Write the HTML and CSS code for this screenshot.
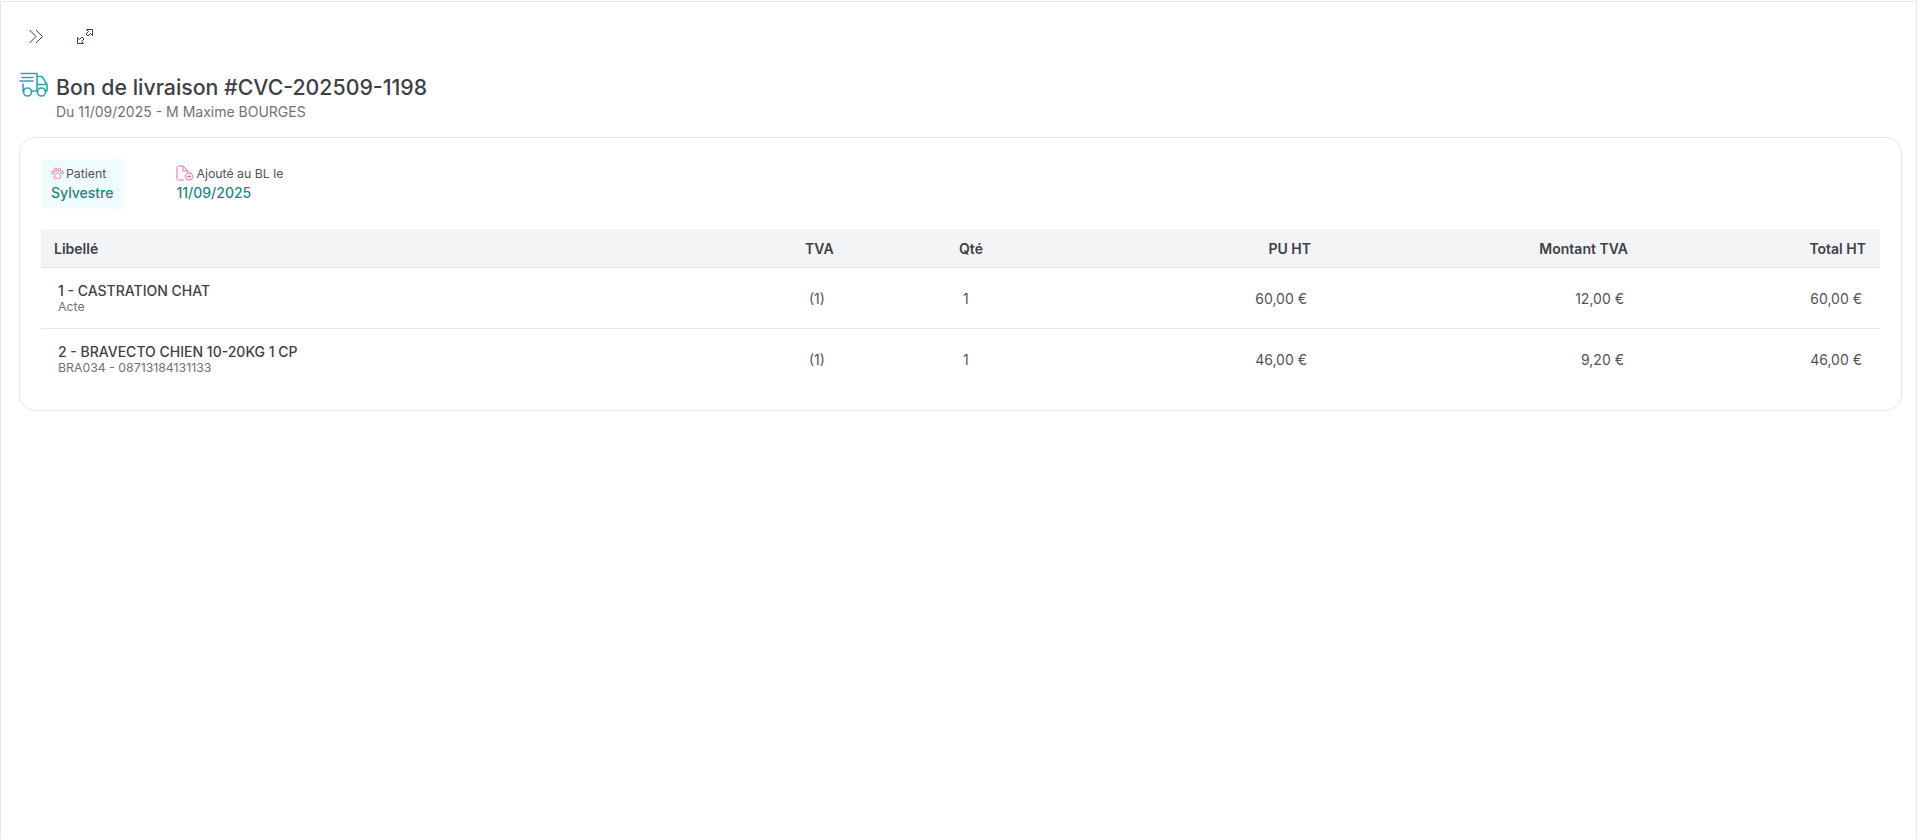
FILE: index.html
```html
<!DOCTYPE html>
<html lang="fr">
<head>
    <meta charset="UTF-8">
    <title>Bon de livraison #CVC-202509-1198</title>
    <link rel="stylesheet" href="styles.css">
</head>
<body>
    <div class="panel">
        <div class="toolbar">
            <button class="tool-btn">
                <svg width="20" height="20" viewBox="0 0 20 20" fill="none" stroke="#374151" stroke-width="1"><path d="M2.500 4l6.500 6.500-6.500 6.500M9 4l6.500 6.500-6.500 6.500"/></svg>
            </button>
            <button class="tool-btn">
                <svg width="20" height="20" viewBox="0 0 20 20" fill="none" stroke="#374151" stroke-width="1"><path d="M1.500 17.500V11.500L3.500 13.500 6 11 8 13 5.500 15.500 7.500 17.500ZM16.500 3.500H10.500L12.500 5.500 10 8 12 10 14.500 7.500 16.500 9.500Z"/></svg>
            </button>
        </div>

        <div class="doc-head">
            <svg class="doc-icon" width="30" height="26" viewBox="0 0 30 26" fill="none" stroke="#2ba6b5" stroke-width="1.600" stroke-linecap="round" stroke-linejoin="round">
                <path d="M2 1.500h16v6M18 4.500h5l5 8v6.500h-2M18 7v12h-6M4 12v7h1M18 12.500h10M3 5.500h11M1 9h13"/>
                <circle cx="8.500" cy="20" r="4"/>
                <circle cx="22.500" cy="20" r="4"/>
            </svg>
            <div>
                <h1>Bon de livraison #CVC-202509-1198</h1>
                <p class="doc-sub">Du 11/09/2025 - M Maxime BOURGES</p>
            </div>
        </div>

        <div class="card">
            <div class="infos">
                <div class="info info-patient">
                    <div class="info-label">
                        <svg width="13" height="13" viewBox="0 0 14 14" fill="none" stroke="#ec6fb0" stroke-width="1"><ellipse cx="2" cy="6" rx="1.300" ry="1.600"/><ellipse cx="5" cy="3" rx="1.300" ry="1.800"/><ellipse cx="9" cy="3" rx="1.300" ry="1.800"/><ellipse cx="12" cy="6" rx="1.300" ry="1.600"/><path d="M7 6.500c-2 0-3.500 2.500-3.500 4.500 0 1.500 1.500 1.800 3.500 1.300 2 .5 3.500.2 3.500-1.300 0-2-1.500-4.500-3.500-4.500z"/></svg>
                        Patient
                    </div>
                    <div class="info-value">Sylvestre</div>
                </div>
                <div class="info">
                    <div class="info-label">
                        <svg width="18" height="16" viewBox="0 0 18 16" fill="none" stroke="#ec6fb0" stroke-width="1"><path d="M8 15H2.500A1.500 1.500 0 0 1 1 13.500v-11A1.500 1.500 0 0 1 2.500 1H7l5 5v1.500M7 1v5h5"/><circle cx="13" cy="11.500" r="3.700"/><path d="M13 9.500v4M11 11.500h4"/></svg>
                        Ajouté au BL le
                    </div>
                    <div class="info-value">11/09/2025</div>
                </div>
            </div>

            <table class="lines">
                <colgroup>
                    <col class="col-label">
                    <col class="col-tva">
                    <col class="col-qty">
                    <col class="col-pu">
                    <col class="col-amount">
                    <col class="col-total">
                </colgroup>
                <thead>
                    <tr>
                        <th>Libellé</th>
                        <th>TVA</th>
                        <th>Qté</th>
                        <th class="num">PU HT</th>
                        <th class="num">Montant TVA</th>
                        <th class="num">Total HT</th>
                    </tr>
                </thead>
                <tbody>
                    <tr>
                        <td class="line-cell">
                            <div class="line-name">1 - CASTRATION CHAT</div>
                            <div class="line-ref">Acte</div>
                        </td>
                        <td>(1)</td>
                        <td>1</td>
                        <td class="num">60,00 €</td>
                        <td class="num">12,00 €</td>
                        <td class="num">60,00 €</td>
                    </tr>
                    <tr>
                        <td class="line-cell">
                            <div class="line-name">2 - BRAVECTO CHIEN 10-20KG 1 CP</div>
                            <div class="line-ref">BRA034 - 08713184131133</div>
                        </td>
                        <td>(1)</td>
                        <td>1</td>
                        <td class="num">46,00 €</td>
                        <td class="num">9,20 €</td>
                        <td class="num">46,00 €</td>
                    </tr>
                </tbody>
            </table>
        </div>
    </div>
</body>
</html>
```

FILE: styles.css
```css
* {
    box-sizing: border-box;
}
body {
    margin: 0;
    font-family: 'Inter', sans-serif;
    color: #3f3f46;
    background-color: white;
}
.panel {
    height: 839px;
    overflow: hidden;
    margin-top: 1px;
    margin-right: 3px;
    border-top: 1px solid #e5e7eb;
    border-left: 1px solid #e5e7eb;
    border-right: 1px solid #e5e7eb;
    padding: 24px 14px 0 18px;
}
.toolbar {
    display: flex;
    gap: 29px;
    padding-left: 8px;
    height: 24px;
}
.tool-btn {
    width: 20px;
    height: 20px;
    padding: 0;
    border: none;
    background: none;
    display: flex;
}
.doc-head {
    display: flex;
    align-items: flex-start;
    gap: 7px;
    margin-top: 22px;
    margin-bottom: 15px;
}
.doc-icon {
    flex: none;
    margin-top: 0;
}
h1 {
    margin: 0;
    font-size: 21.300px;
    line-height: 30px;
    font-weight: 500;
    color: #3f3f46;
}
.doc-sub {
    margin: 0;
    font-size: 14px;
    line-height: 20px;
    color: #71717a;
}
.card {
    border: 1px solid #e5e7eb;
    border-radius: 16px;
    padding: 21px 21px 21px;
}
.infos {
    display: flex;
    gap: 52px;
    margin-bottom: 20px;
}
.info {
    padding: 4px 0;
    height: 50px;
}
.info-patient {
    padding: 4px 11px 4px 10px;
    background-color: #f0fbfd;
    border-radius: 8px;
}
.info-label {
    display: flex;
    align-items: center;
    gap: 2px;
    height: 20px;
    font-size: 12.300px;
    color: #52525b;
}
.info-value {
    font-size: 14px;
    line-height: 20px;
    font-weight: 500;
    color: #1f8580;
}
.lines {
    width: 100%;
    border-collapse: collapse;
    table-layout: fixed;
}
.col-label { width: 751px; }
.col-tva { width: 154px; }
.col-qty { width: 154px; }
.col-pu { width: 225px; }
.col-amount { width: 317px; }
th {
    height: 38px;
    padding: 2px 14px 0 13px;
    background-color: #f3f4f6;
    border-bottom: 1px solid #e5e7eb;
    font-size: 14px;
    font-weight: 600;
    text-align: left;
    color: #3f3f46;
}
td {
    height: 61px;
    padding: 2px 18px 0 17px;
    font-size: 14px;
    color: #52525b;
}
td.line-cell {
    padding-top: 1px;
}
tbody tr:first-child td {
    border-bottom: 1px solid #e5e7eb;
}
.num {
    text-align: right;
}
.line-name {
    font-size: 14px;
    line-height: 17px;
    font-weight: 500;
    color: #3f3f46;
}
.line-ref {
    font-size: 12.300px;
    line-height: 15px;
    color: #71717a;
}
```
